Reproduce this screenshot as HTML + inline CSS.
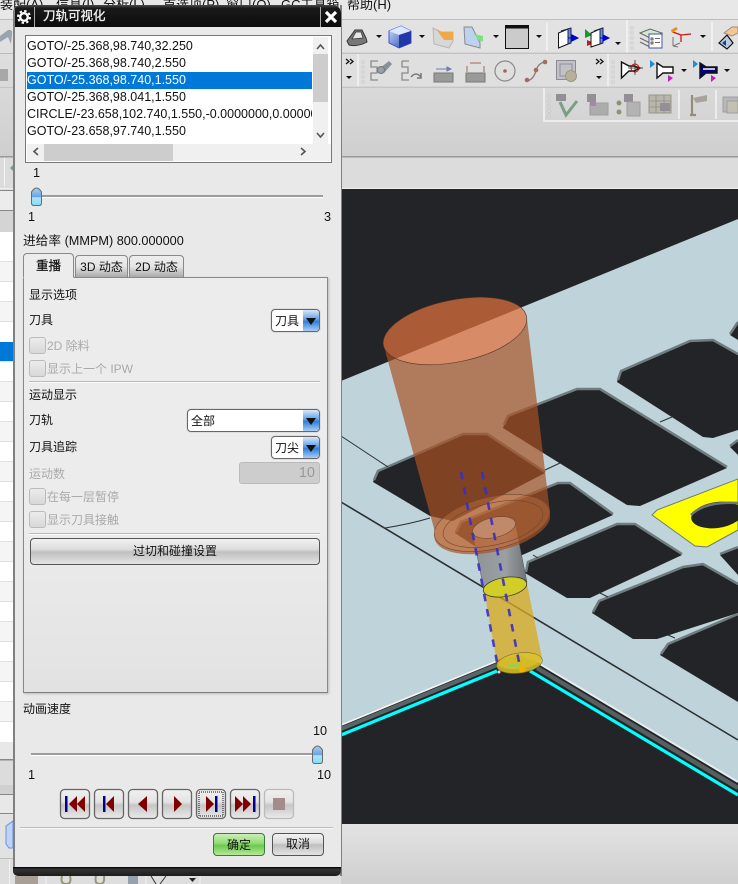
<!DOCTYPE html>
<html lang="zh"><head><meta charset="utf-8"><title>刀轨可视化</title>
<style>
html,body{margin:0;padding:0;width:738px;height:884px;overflow:hidden;background:#e0e0e0}
body{position:relative;font:12px "Liberation Sans","Noto Sans CJK SC",sans-serif;color:#111}
svg{position:absolute;left:0;top:0}
.a{position:absolute;white-space:nowrap}
.t{position:absolute;white-space:nowrap;line-height:16px;height:16px;transform:translateY(-8px)}
.n{font-size:12.7px}
.g{color:#aaa}
#dlg{position:absolute;left:13px;top:5px;width:328px;height:871px;background:#e9e9e9;border-radius:8px 8px 5px 5px;overflow:hidden}
.list div{position:absolute;left:2px;width:285px;height:17px;line-height:17px;font-size:12.5px;overflow:hidden;white-space:nowrap;padding-left:0}
.combo{position:absolute;background:#fff;border:1.5px solid #666;border-radius:4px;box-sizing:border-box;box-shadow:0 0 0 1px #ddd}
.combo b{position:absolute;right:0;top:0;bottom:0;width:16px;background:linear-gradient(#dbe7f8,#5d9ee6 45%,#2f7fd8 55%,#a9cdf2);border-radius:0 3px 3px 0}
.combo b:after{content:"";position:absolute;left:2.5px;top:8px;border:5.5px solid transparent;border-top:7px solid #111;border-bottom:0}
.combo span{position:absolute;left:3px;top:3px;line-height:16px}
.cb{position:absolute;width:15px;height:15px;border:1px solid #bbb;border-radius:3px;background:linear-gradient(#ececec,#d8d8d8)}
.btn{position:absolute;box-sizing:border-box;border:1.5px solid #555;border-radius:4px;background:linear-gradient(#f2f2f2,#dcdcdc 42%,#bfbfbf 52%,#e4e4e4);text-align:center}
.tab{position:absolute;box-sizing:border-box;border:1px solid #888;border-bottom:0;border-radius:4px 4px 0 0;text-align:center;line-height:22px;background:linear-gradient(#eee,#e4e4e4 50%,#aaa)}
</style></head><body>
<svg width="738" height="884" viewBox="0 0 738 884" xmlns="http://www.w3.org/2000/svg">
<defs>
<linearGradient id="hg" x1="0" y1="0" x2="0" y2="1"><stop offset="0" stop-color="#e3e3e3"/><stop offset="1" stop-color="#cfcfcf"/></linearGradient>
<linearGradient id="cube" x1="0" y1="0" x2="1" y2="1"><stop offset="0" stop-color="#cfe0ff"/><stop offset="1" stop-color="#1f3fb0"/></linearGradient>
<linearGradient id="sh" x1="0" y1="0" x2="1" y2="0"><stop offset="0" stop-color="#8d9295"/><stop offset=".6" stop-color="#9ba0a2"/><stop offset="1" stop-color="#6d7275"/></linearGradient>
</defs>
<rect width="738" height="884" fill="#dedede"/>
<rect width="738" height="19" fill="#e8e8e8"/>
<rect y="19" width="738" height="1" fill="#bdbdbd"/>
<rect y="20" width="738" height="136" fill="url(#hg)"/>
<rect y="53" width="738" height="1" fill="#bbb"/>
<rect y="20" x="341" width="397" height="33" fill="#e2e2e2"/>
<rect y="54" x="341" width="397" height="33" fill="#dfdfdf"/>
<rect y="87" x="341" width="397" height="1" fill="#c2c2c2"/>
<rect y="156" width="738" height="1.5" fill="#999"/>
<rect y="157.500" width="738" height="31" fill="#dcdcdc"/>
<rect y="188" width="738" height="1" fill="#f0f0f0"/>
<rect y="824" x="341" width="397" height="60" fill="url(#hg)"/>
<!-- left strip -->
<rect x="0" y="20" width="13" height="33" fill="#e0e0e0"/>
<path d="M0 36 L8 30 Q13 29 12 34 L11 44 L8 37 L0 42Z" fill="#9aa4ae"/>
<rect x="0" y="69" width="8" height="12" fill="#a8a8a8"/>
<rect y="87" x="0" width="13" height="1" fill="#c4c4c4"/>
<rect x="4" y="158" width="1" height="28" fill="#f4f4f4"/>
<path d="M10 168 L13 165 V171Z" fill="#7f9a90"/>
<rect y="190" x="0" width="13" height="1.500" fill="#888"/>
<rect y="191" x="0" width="13" height="19" fill="#ececec"/>
<rect y="210" x="0" width="13" height="1.500" fill="#888"/>
<rect y="211" x="0" width="13" height="21" fill="#d4d4d4"/>
<rect y="232" x="0" width="13" height="510" fill="#fff"/>
<g fill="#f5f5f5"><rect y="262" width="13" height="20" /><rect y="301" width="13" height="20"/><rect y="381" width="13" height="20"/><rect y="421" width="13" height="20"/><rect y="461" width="13" height="20"/><rect y="501" width="13" height="20"/><rect y="541" width="13" height="20"/><rect y="581" width="13" height="20"/><rect y="621" width="13" height="20"/><rect y="661" width="13" height="20"/><rect y="701" width="13" height="20"/></g>
<g fill="#e2e2e2"><rect y="261" width="13" height="1"/><rect y="281" width="13" height="1"/><rect y="301" width="13" height="1"/><rect y="321" width="13" height="1"/><rect y="361" width="13" height="1"/><rect y="381" width="13" height="1"/><rect y="401" width="13" height="1"/><rect y="421" width="13" height="1"/><rect y="441" width="13" height="1"/><rect y="461" width="13" height="1"/><rect y="481" width="13" height="1"/><rect y="501" width="13" height="1"/><rect y="521" width="13" height="1"/><rect y="541" width="13" height="1"/><rect y="561" width="13" height="1"/><rect y="581" width="13" height="1"/><rect y="601" width="13" height="1"/><rect y="621" width="13" height="1"/><rect y="641" width="13" height="1"/><rect y="661" width="13" height="1"/><rect y="681" width="13" height="1"/><rect y="701" width="13" height="1"/><rect y="721" width="13" height="1"/></g>
<rect y="342" width="13" height="19" fill="#0078d7"/>
<rect y="742" width="13" height="17" fill="#e8e8e8"/>
<rect y="759" width="13" height="1.500" fill="#888"/>
<rect y="761" width="13" height="33" fill="#dcdcdc"/>
<rect y="785" width="13" height="9" fill="#d0d0d0"/>
<rect y="794" width="13" height="1" fill="#888"/>
<rect y="795" width="13" height="18" fill="#e8e8e8"/>
<rect y="813" width="13" height="1" fill="#888"/>
<rect y="814" width="13" height="44" fill="#e2e2e2"/>
<path d="M6 826 L13 821 V848 H9 L6 844Z" fill="#bcd3f8" stroke="#6f8fe0"/>
<rect y="858" width="13" height="1" fill="#bbb"/>
<rect x="9" y="859" width="1" height="25" fill="#f2f2f2"/>
<!-- viewport -->
<rect x="341" y="189" width="397" height="635" fill="#232428"/>
<polygon points="341,381 738,219 738,782 540,663 520,655 497,660 341,724" fill="#bed4da"/>
<path d="M341 725 L497 661" stroke="#f0f4f5" stroke-width="2" fill="none"/>
<path d="M341 729 L497 665" stroke="#5a6568" stroke-width="4" fill="none"/>
<path d="M341 735 L497 671" stroke="#00ffff" stroke-width="3.200" fill="none"/>
<path d="M540 664 L738 782" stroke="#e6eef0" stroke-width="2" fill="none"/>
<path d="M537 668 L738 788" stroke="#56605f" stroke-width="4.500" fill="none"/>
<path d="M530 671 L738 795" stroke="#00ffff" stroke-width="3.200" fill="none"/>
<g fill="#232428">
<polygon points="507,417 577,390 600,390 727,468 640,506 627,505 503,428"/>
<polygon points="620,372 690,342 713,341 738,355 738,430 713,438 703,437 617,382"/>
<polygon points="377,472 463,435 487,435 545,473 453,521 430,516 373,482"/>
<polygon points="460,523 558,484 570,484 613,515 520,556 490,556 455,533"/>
<polygon points="527,563 617,525 635,525 682,555 590,598 567,598 525,573"/>
<polygon points="592,613 598,602 683,568 703,565 738,585 738,613 657,639 633,639"/>
<polygon points="660,655 667,645 738,615 738,702"/>
<polygon points="730,335 738,322 738,340"/>
<polygon points="730,447 738,441 738,455"/>
<polygon points="720,555 738,548 738,575"/>
</g>
<g fill="none" stroke="#707d80" stroke-width="2.500">
<path d="M504 425 L508 416 L577 389 L600 389 L727 467"/>
<path d="M618 380 L621 371 L690 341 L713 340 L738 354"/>
<path d="M374 480 L378 471 L463 434 L487 434 L545 472"/>
<path d="M456 532 L461 522 L558 483 L570 483 L613 514"/>
<path d="M526 572 L528 562 L617 524 L635 524 L682 554"/>
<path d="M593 612 L599 601 L683 567 L703 564 L738 584"/>
<path d="M661 654 L668 644 L738 614"/>
<path d="M730 334 L738 322"/><path d="M730 446 L738 440"/><path d="M720 554 L738 547"/>
</g>
<polygon points="652,515 657,510 738,479 738,530 707,547 695,546" fill="#ffff00" stroke="#6b787b" stroke-width="1"/>
<ellipse cx="717" cy="515" rx="26" ry="13" fill="#232428" transform="rotate(-8 717 515)"/>
<path d="M691 515 Q705 501 738 503" stroke="#6b787b" stroke-width="2.500" fill="none"/>
<g fill="none" stroke="#2b2f31" stroke-width="1">
<path d="M341 436 L388 467"/><path d="M385 528 Q410 524 430 518"/>
<path d="M660 422 L672 417"/><path d="M545 470 L560 463"/><path d="M533 555 L538 558"/>
<path d="M600 593 L608 597"/><path d="M668 635 L675 638"/>
</g>
<path d="M341 502 L738 740" stroke="#2b2f31" stroke-width="1.600" fill="none"/>
<!-- shank -->
<path d="M472 530 L484 590 L527 582 L515 523Z" fill="url(#sh)" stroke="#555" stroke-width=".5"/>
<!-- yellow section -->
<path d="M484 590 L497 663 A23 10 -8 0 0 542 658 L527 584 Z" fill="#d9ab22" fill-opacity=".78"/>
<ellipse cx="519.500" cy="663" rx="23" ry="10" fill="#dcc22a" fill-opacity=".85" stroke="#7a7424" stroke-width=".6" transform="rotate(-8 519.500 663)"/>
<ellipse cx="505" cy="587" rx="22" ry="9.500" fill="#d2ce28" stroke="#3a3a2a" stroke-width=".8" transform="rotate(-10 505 587)"/>
<path d="M508 666 Q516 664 522 667" stroke="#8fd450" stroke-width="2.500" fill="none"/>
<circle cx="522" cy="669" r="3.500" fill="#f0b400"/>
<circle cx="499" cy="672" r="1.500" fill="#f6c8d8"/>
<!-- orange tool -->
<path d="M383 343 A73 31 -11.500 0 0 527 319 L550 513 L550 519 A59 26 -13 0 1 435 532 Z" fill="#aa5123" fill-opacity=".69"/>
<ellipse cx="455" cy="331" rx="73" ry="31" fill="#e1703a" fill-opacity=".72" stroke="#4b3428" stroke-width=".6" transform="rotate(-11.500 455 331)"/>
<ellipse cx="492" cy="523" rx="59" ry="26" fill="#e68c50" fill-opacity=".28" stroke="#6e4630" stroke-width=".6" transform="rotate(-13 492 523)"/>
<ellipse cx="493" cy="524" rx="51" ry="21" fill="none" stroke="#6e4630" stroke-width=".6" transform="rotate(-13 493 524)"/>
<ellipse cx="494" cy="527.500" rx="22" ry="10" fill="#c08a6a" stroke="#6e4630" stroke-width=".6" transform="rotate(-13 494 527.500)"/>
<!-- dashes -->
<g stroke="#3a2fc4" stroke-width="2.600" fill="none" stroke-dasharray="7.500 8" stroke-opacity=".9">
<path d="M461 472 L497 662"/><path d="M482 472 L519 662"/>
</g>
<!-- toolbar groups -->
<g fill="none">
<path d="M547 23 V51 M627 20 V53 M712 22 V51 M358 54 V87 M608 54 V87 M544 88 V121 H738 M679 90 V119 M716 90 V119" stroke="#f4f4f4" stroke-width="1.500"/>
<path d="M341 53 H738 M341 87 H738" stroke="#c8c8c8"/>
</g>
<g fill="#fff" stroke="#aaa" stroke-width=".5"><rect x="631" y="27" width="2" height="2"/><rect x="631" y="32" width="2" height="2"/><rect x="631" y="37" width="2" height="2"/><rect x="631" y="42" width="2" height="2"/><rect x="631" y="47" width="2" height="2"/>
<rect x="362" y="61" width="2" height="2"/><rect x="362" y="66" width="2" height="2"/><rect x="362" y="71" width="2" height="2"/><rect x="362" y="76" width="2" height="2"/><rect x="362" y="81" width="2" height="2"/>
<rect x="612" y="61" width="2" height="2"/><rect x="612" y="66" width="2" height="2"/><rect x="612" y="71" width="2" height="2"/><rect x="612" y="76" width="2" height="2"/><rect x="612" y="81" width="2" height="2"/>
<rect x="548" y="95" width="2" height="2"/><rect x="548" y="100" width="2" height="2"/><rect x="548" y="105" width="2" height="2"/><rect x="548" y="110" width="2" height="2"/><rect x="548" y="115" width="2" height="2"/></g>
<g fill="#111">
<path d="M376 35h6l-3 3z M419 35h6l-3 3z M493 35h6l-3 3z M536 35h6l-3 3z M615 42h6l-3 3z M700 35h6l-3 3z M346 76h6l-3 3z M596 76h6l-3 3z M681 69h6l-3 3z M724 69h6l-3 3z"/>
</g>
<g fill="none" stroke="#111" stroke-width="1.300"><path d="M346 59l3 2.500-3 2.500M350 59l3 2.500-3 2.500M596 59l3 2.500-3 2.500M600 59l3 2.500-3 2.500"/></g>
<path d="M347 41 L355 30 H362 L366 38 L367 42 Q358 47 349 45Z" fill="#777" stroke="#333"/><path d="M352 39 L356 32 H361 L363 38Z" fill="#e8e8e8" stroke="#333" stroke-width=".7"/>
<path d="M389 31 L401 26 L411 31 V43 L399 48 L389 43Z" fill="url(#cube)" stroke="#3a5ad0"/><path d="M389 31 L399 35 L411 31 L401 26Z" fill="#dbe6ff"/><path d="M399 35V48L411 43V31Z" fill="#2238a8"/>
<path d="M433 28 L441 32 H453 V41 L449 48 L434 44Z" fill="#d7d7d7" stroke="#b8b8b8"/><path d="M436 29 L442 32 H453 V40 H444Z" fill="#f0a848"/>
<path d="M464 27 L472 27 L480 43 V48 L465 44Z" fill="#bcd2f0" stroke="#8a8a8a"/><path d="M474 34 L483 36 V41 L480 42Z" fill="#7de27d"/>
<rect x="505.500" y="25.500" width="23" height="23" fill="#cbcbcb" stroke="#111"/><rect x="505" y="25" width="24" height="3.500" fill="#111"/>
<path d="M558.500 33 L568 29 V44 L558.500 48Z" fill="#fff" stroke="#111"/><path d="M561 31 L571 28 V43 L568 44 V29Z" fill="#5f8fe0" stroke="#224"/><path d="M568 38 H574 M572 35 L578 38 L572 41Z" fill="#0000cc" stroke="#0000cc"/>
<path d="M585 29 L592 35 L585 38Z" fill="#0d9d2a"/><path d="M587 40 L594 43 L587 46Z" fill="#d01515"/><path d="M591 33 L600 29 V44 L591 47Z" fill="#fff" stroke="#111"/><path d="M594 31 L603 28 V43 L600 44 V29Z" fill="#5f8fe0" stroke="#224"/><path d="M600 38 H605 M603 35 L609 38 L603 41Z" fill="#0000cc" stroke="#0000cc"/>
<path d="M640 33 L650 29 L662 33 L650 38Z" fill="#cfe8d0" stroke="#666"/><path d="M640 38 L650 43 M640 42 L650 47" stroke="#666" fill="none"/><rect x="649" y="34" width="13" height="14" fill="#fff" stroke="#44559a"/><path d="M651 38h2v2h-2zM651 42h2v2h-2zM655 38.500h5M655 42.500h5" stroke="#333" fill="none" stroke-width=".8"/>
<path d="M681 35 V42 M681 35 L691 34 M681 35 L673 32" stroke="#d01515" stroke-width="1.300" fill="none"/><path d="M671 30 L676 27 L678 29 L672 33Z" fill="#f08a18"/><path d="M673 37 V46 M673 46 L680 43 M673 46 L678 47" stroke="#777" fill="none"/>
<path d="M719 43 L727 35 L733 43 L727 49Z" fill="#bcd" stroke="#111" stroke-width="1.200"/><path d="M722 43 L726 40 V46Z" fill="#1a3a9e"/><path d="M724 33 L732 27 H738 V33 L732 36Z" fill="#f0c898" stroke="#a87"/>
<g fill="none" stroke="#8b8b8b" stroke-width="1.300"><path d="M378 61 H371 V67 H377 V73 H371 V80 H378"/><path d="M402 61 H409 M402 61 V67 H408 V73 H402 V80 H409"/></g>
<path d="M380 68 L389 61 L392 64 L384 73 Z" fill="#87929a"/><circle cx="381" cy="70" r="3.500" fill="#98a0a8" stroke="#777"/>
<path d="M411 77 Q416 71 421 77 M421 73 V78 H417" fill="none" stroke="#777" stroke-width="1.500"/>
<rect x="434" y="73" width="19" height="9" fill="#9a9a9a" stroke="#777"/><path d="M436 69 H449 M447 67 L451 69 L447 71Z" stroke="#6f7fa8" fill="#6f7fa8"/>
<rect x="466" y="73" width="19" height="9" fill="#9a9a9a" stroke="#777"/><path d="M467 72 V66 M484 72 V66 M470 63 H481" stroke="#a06a5a" fill="none"/>
<circle cx="505" cy="71" r="10" fill="none" stroke="#8a8a8a" stroke-width="1.200"/><circle cx="505" cy="71" r="1.800" fill="#a06a5a"/>
<path d="M527 81 Q533 80 536 71 Q538 63 545 62" fill="none" stroke="#8a7a7a" stroke-width="1.300"/><circle cx="527" cy="80" r="2.300" fill="#a86a60"/><circle cx="536" cy="70" r="2.300" fill="#a86a60"/><circle cx="545" cy="62" r="2.300" fill="#a86a60"/>
<rect x="556.500" y="60.500" width="19" height="19" fill="#c2c2c2" stroke="#8a8a9a"/><rect x="560" y="64" width="12" height="12" fill="none" stroke="#8f8fa8"/><circle cx="571" cy="76" r="5.500" fill="#b9b09a" stroke="#998"/>
<path d="M621.500 62 L629 66 H634 L640 68 L634 71 H629 L621.500 78 Z" fill="#fff" stroke="#111" stroke-width="1.400"/><circle cx="635" cy="68" r="4" fill="none" stroke="#d00"/><path d="M635 60 V75 M628 68 H643" stroke="#222" stroke-width=".7"/>
<path d="M650 60 L655 64 L650 68Z" fill="#1f8fcc"/><path d="M657 63 L663 67 H673 V73 H663 L657 78Z" fill="#fff" stroke="#111" stroke-width="1.400"/><path d="M668 75 L673 78 L668 82Z" fill="#c020c0"/>
<path d="M693 60 L698 64 L693 68Z" fill="#1f8fcc"/><path d="M700 63 L706 67 H717 V73 H706 L700 78Z" fill="#000080" stroke="#111" stroke-width="1.400"/><path d="M703 69 H715" stroke="#fff" stroke-width="1.500"/><path d="M711 75 L716 78 L711 82Z" fill="#c020c0"/>
<g opacity=".9">
<path d="M556 94 H566 V101 H556Z" fill="#8d8890"/><path d="M560 102 L566 115 L577 101" fill="none" stroke="#6f9a7c" stroke-width="3"/>
<rect x="587" y="94" width="9" height="8" fill="#8d8890"/><rect x="590" y="103" width="18" height="12" fill="#a8a8a8" stroke="#999"/><rect x="590" y="102" width="6" height="4" fill="#a080a0"/>
<rect x="624" y="94" width="9" height="8" fill="#8d8890"/><rect x="627" y="102" width="13" height="14" fill="#b0b0b0" stroke="#999"/><circle cx="619" cy="103" r="2.500" fill="#8a8a6a"/><circle cx="619" cy="112" r="2.500" fill="#8a8a6a"/>
<rect x="649" y="95" width="22" height="18" fill="#b4b4a8" stroke="#8f8f80"/><path d="M649 101H671M649 107H671M656 95V113M664 95V113" stroke="#88887a" stroke-width=".8"/><rect x="660" y="103" width="10" height="8" fill="#8d8890"/>
<path d="M692 95 V115 M690 115 H696" stroke="#8f8670" stroke-width="2.200" fill="none"/><path d="M693 98 L707 95 V101 L696 103Z" fill="#a59f95"/>
<rect x="723" y="97" width="15" height="15" fill="#b5b5b5" stroke="#999"/><rect x="727" y="101" width="11" height="12" fill="#c0bfae" stroke="#999"/>
</g>
<g opacity=".9">
<rect x="15" y="876" width="23" height="8" fill="#a39a90"/>
<path d="M62 876 Q60 884 66 884 Q72 884 70 876" fill="none" stroke="#8f8f70" stroke-width="2"/>
<path d="M96 876 Q94 884 100 884 Q105 884 104 876" fill="none" stroke="#8f8f70" stroke-width="2"/>
<rect x="128" y="876" width="10" height="8" fill="#8f9ba8"/>
<path d="M151 876 L156 884 M166 876 L160 884" stroke="#222" fill="none"/>
<path d="M189 878h7l-3.500 4z" fill="#111"/>
<path d="M46 876 V884 M146 876 V884 M200 876 V884" stroke="#f4f4f4"/>
</g>
<g font-family="'Liberation Sans','Noto Sans CJK SC',sans-serif" font-size="13" fill="#111">
<text x="0" y="9">装配(A)</text><text x="56" y="9">信息(I)</text><text x="103" y="9">分析(L)</text><text x="163" y="9">首选项(P)</text><text x="226" y="9">窗口(O)</text><text x="281" y="9">GC工具箱</text><text x="347" y="9">帮助(H)</text>
</g>
<rect x="340" y="5" width="2" height="871" fill="#808080"/>
</svg>

<div id="dlg">
<div class="a" style="left:0;top:0;width:328px;height:22px;background:linear-gradient(#4a4a4a,#1a1a1a 15%,#0b0b0b)"></div>
<div class="a" style="left:30px;top:2.5px;color:#f2f2f2;font-size:12.5px;line-height:16px;-webkit-text-stroke:.3px #f2f2f2">刀轨可视化</div>
<div class="a" style="left:21px;top:2px;width:1px;height:20px;background:#aaa"></div>
<div class="a" style="left:307px;top:2px;width:1px;height:20px;background:#aaa"></div>
<div class="a" style="left:0;top:0;width:1.5px;height:871px;background:#808080"></div>
<div class="a" style="left:0;top:862px;width:328px;height:9px;background:linear-gradient(#000,#333 25%,#1c1c1c)"></div>
</div>

<svg width="738" height="884" viewBox="0 0 738 884" style="pointer-events:none">
<circle cx="24" cy="17" r="3.800" fill="none" stroke="#fff" stroke-width="2.400"/>
<circle cx="24" cy="17" r="6" fill="none" stroke="#fff" stroke-width="2" stroke-dasharray="2.400 2.312"/>
<path d="M326 12 L336 22 M336 12 L326 22" stroke="#fff" stroke-width="3.200"/>
</svg>

<div class="a list" style="left:25px;top:35px;width:305px;height:126px;background:#fff;border:1px solid #777;box-sizing:content-box">
<div style="top:1.5px;left:1px">GOTO/-25.368,98.740,32.250</div>
<div style="top:18.5px;left:1px">GOTO/-25.368,98.740,2.550</div>
<div style="top:35.5px;left:1px;background:#0078d7;color:#fff">GOTO/-25.368,98.740,1.550</div>
<div style="top:52.5px;left:1px">GOTO/-25.368,98.041,1.550</div>
<div style="top:69.5px;left:1px">CIRCLE/-23.658,102.740,1.550,-0.0000000,0.00000</div>
<div style="top:86.5px;left:1px">GOTO/-23.658,97.740,1.550</div>
<span class="a" style="left:287px;top:1px;width:15px;height:108px;background:#f0f0f0"></span>
<span class="a" style="left:287px;top:18px;width:15px;height:48px;background:#cdcdcd"></span>
<span class="a" style="left:1px;top:108px;width:304px;height:17px;background:#f0f0f0"></span>
<span class="a" style="left:18px;top:108px;width:129px;height:17px;background:#cdcdcd"></span>
</div>
<svg width="738" height="884" viewBox="0 0 738 884">
<g fill="none" stroke="#555" stroke-width="1.600"><path d="M317 49 L320.500 45 L324 49"/><path d="M317 133 L320.500 137 L324 133"/><path d="M38 148 L34 151.500 L38 155"/><path d="M301 148 L305 151.500 L301 155"/></g>
<rect x="32" y="195" width="291" height="2" fill="#9c9c9c"/><rect x="32" y="197" width="291" height="1" fill="#fff"/>
<rect x="31" y="753" width="287" height="2" fill="#9c9c9c"/><rect x="31" y="755" width="287" height="1" fill="#fff"/>
<defs><linearGradient id="th" x1="0" y1="0" x2="0" y2="1"><stop offset="0" stop-color="#a9d0ee"/><stop offset=".5" stop-color="#6aa5e2"/><stop offset=".55" stop-color="#aee2f8"/><stop offset="1" stop-color="#7fe0f6"/></linearGradient>
<linearGradient id="btn" x1="0" y1="0" x2="0" y2="1"><stop offset="0" stop-color="#f0f0f0"/><stop offset=".42" stop-color="#e4e4e4"/><stop offset=".55" stop-color="#c6c6c6"/><stop offset="1" stop-color="#ebebeb"/></linearGradient></defs>
<path d="M31.500 192 Q36.500 184 41.500 192 V203 Q41.500 205.500 39 205.500 H34 Q31.500 205.500 31.500 203Z" fill="url(#th)" stroke="#6a6a6a"/>
<path d="M312.500 750 Q317.500 742 322.500 750 V761 Q322.500 763.500 320 763.500 H315 Q312.500 763.500 312.500 761Z" fill="url(#th)" stroke="#6a6a6a"/>
<g stroke="#666" stroke-width="1.300" fill="url(#btn)">
<rect x="60.500" y="789.500" width="29" height="29" rx="4"/><rect x="94.500" y="789.500" width="29" height="29" rx="4"/><rect x="128.500" y="789.500" width="29" height="29" rx="4"/><rect x="162.500" y="789.500" width="29" height="29" rx="4"/><rect x="196.500" y="789.500" width="29" height="29" rx="4"/><rect x="230.500" y="789.500" width="29" height="29" rx="4"/><rect x="264.500" y="789.500" width="29" height="29" rx="4" stroke="#bbb"/>
</g>
<rect x="199" y="792" width="24" height="24" fill="none" stroke="#111" stroke-dasharray="1 1"/>
<g fill="#800000"><path d="M77 796 L69 804 L77 812Z M85 796 L77 804 L85 812Z"/><path d="M114 796 L106 804 L114 812Z"/><path d="M147 796 L138 804 L147 812Z"/><path d="M174 796 L182 804 L174 812Z"/><path d="M206 796 L214 804 L206 812Z"/><path d="M235 796 L243 804 L235 812Z M243 796 L251 804 L243 812Z"/></g>
<g fill="#000090"><rect x="65" y="796" width="2.500" height="16"/><rect x="103" y="796" width="2.500" height="16"/><rect x="215" y="796" width="2.500" height="16"/><rect x="253" y="796" width="2.500" height="16"/></g>
<rect x="273" y="798" width="12" height="12" fill="#a58c8c"/>
<rect x="20" y="827" width="313" height="1" fill="#bdbdbd"/><rect x="20" y="828" width="313" height="1" fill="#f8f8f8"/>
</svg>

<span class="t n" style="left:33px;top:173px">1</span>
<span class="t n" style="left:28px;top:217px">1</span>
<span class="t n" style="left:324px;top:217px">3</span>
<span class="t n" style="left:23px;top:241px">进给率 (MMPM) 800.000000</span>

<div class="a" style="left:23px;top:277px;width:305px;height:416px;box-sizing:border-box;border:1px solid #888;border-bottom:1.5px solid #808080;box-shadow:1px 1px 2px #bbb;background:linear-gradient(#ececec,#ececec 60%,#e2e2e2)"></div>
<div class="tab" style="left:23px;top:253px;width:51px;height:25px;background:#ececec;border-bottom:1px solid #ececec;line-height:25px;font-size:12.5px;-webkit-text-stroke:.25px #111;z-index:2">重播</div>
<div class="tab" style="left:75px;top:255px;width:53px;height:22px">3D 动态</div>
<div class="tab" style="left:129px;top:255px;width:55px;height:22px">2D 动态</div>

<span class="t" style="left:29px;top:295px">显示选项</span>
<span class="t" style="left:29px;top:320px">刀具</span>
<div class="combo" style="left:271px;top:309px;width:49px;height:23px"><span>刀具</span><b></b></div>
<div class="cb" style="left:29px;top:337px"></div><span class="t g" style="left:47px;top:346px">2D 除料</span>
<div class="cb" style="left:29px;top:360px"></div><span class="t g" style="left:47px;top:369px">显示上一个 IPW</span>
<div class="a" style="left:29px;top:381px;width:291px;height:1px;background:#bbb"></div>
<div class="a" style="left:29px;top:382px;width:291px;height:1px;background:#fafafa"></div>
<span class="t" style="left:29px;top:395px">运动显示</span>
<span class="t" style="left:29px;top:420px">刀轨</span>
<div class="combo" style="left:187px;top:409px;width:133px;height:23px"><span>全部</span><b></b></div>
<span class="t" style="left:29px;top:447px">刀具追踪</span>
<div class="combo" style="left:271px;top:436px;width:49px;height:23px"><span>刀尖</span><b></b></div>
<span class="t g" style="left:29px;top:474px">运动数</span>
<div class="a" style="left:239px;top:462px;width:81px;height:22px;box-sizing:border-box;background:#cdcdcd;border:1px solid #bbb;border-radius:3px;text-align:right;padding-right:4px;line-height:20px;font-size:14.5px;color:#999">10</div>
<div class="cb" style="left:29px;top:488px"></div><span class="t g" style="left:47px;top:497px">在每一层暂停</span>
<div class="cb" style="left:29px;top:511px"></div><span class="t g" style="left:47px;top:520px">显示刀具接触</span>
<div class="a" style="left:29px;top:533px;width:291px;height:1px;background:#bbb"></div>
<div class="a" style="left:29px;top:534px;width:291px;height:1px;background:#fafafa"></div>
<div class="btn" style="left:30px;top:538px;width:290px;height:27px;line-height:25px">过切和碰撞设置</div>

<span class="t" style="left:23px;top:709px">动画速度</span>
<span class="t n" style="left:313px;top:731px">10</span>
<span class="t n" style="left:28px;top:775px">1</span>
<span class="t n" style="left:317px;top:775px">10</span>
<div class="btn" style="left:213px;top:833px;width:52px;height:23px;line-height:22px;border-color:#3c7a3c;background:linear-gradient(#cdeeb8,#8fdc70 45%,#6cc94e 55%,#b4ea98)">确定</div>
<div class="btn" style="left:272px;top:833px;width:52px;height:23px;line-height:21px">取消</div>
</body></html>
